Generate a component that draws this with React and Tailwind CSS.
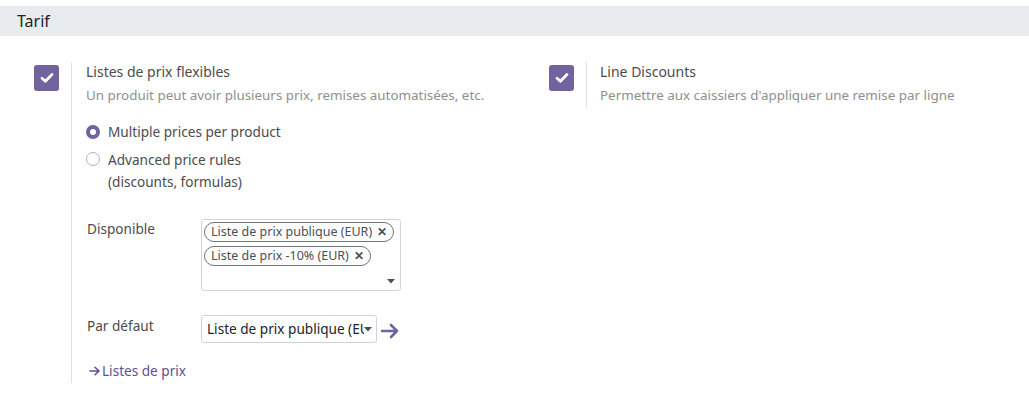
import React from "react";

const Check = () => (
    <div className="w-[25px] h-[26px] rounded-[3px] bg-[#71639e] flex items-center justify-center shrink-0">
        <svg width="14" height="12" viewBox="0 0 14 12">
            <path d="M2 6.2 L5.4 9.3 L12 2.6" fill="none" stroke="white" strokeWidth="2.8" strokeLinecap="round" strokeLinejoin="round" />
        </svg>
    </div>
);

const Tag = ({ label }) => (
    <span className="inline-flex items-center h-[20px] px-[6px] rounded-full border border-[#6c757d] text-[12.5px] text-[#495057] leading-none gap-[5px] whitespace-nowrap">
        {label}
        <span className="text-[12px] font-bold text-[#495057]">✕</span>
    </span>
);

const Caret = () => (
    <svg width="8" height="5" viewBox="0 0 8 5"><path d="M0 0 L8 0 L4 4.5 Z" fill="#495057" /></svg>
);

export default function App() {
    return (
        <div className="w-[1029px] h-[397px] bg-white pt-[6px] text-[#374151]" style={{ fontFamily: "'Noto Sans', sans-serif" }}>
            <div className="h-[30px] bg-[#e9ecef] pl-[17px] flex items-center text-[16px] text-[#212529]">Tarif</div>

            <div className="flex pt-[26px]">
                {/* left setting */}
                <div className="w-[515px] shrink-0 pl-[34px] flex">
                    <div className="pt-[3px]"><Check /></div>
                    <div className="ml-[12px] border-l border-[#dee2e6] pl-[14px] pb-[2px]">
                        <div className="text-[14px] text-[#4c4c4c] leading-[20px]">Listes de prix flexibles</div>
                        <div className="text-[13.4px] text-[#8f8f8f] leading-[20px] mt-[3px] whitespace-nowrap">Un produit peut avoir plusieurs prix, remises automatisées, etc.</div>

                        <div className="mt-[17px] flex flex-col text-[13.6px] text-[#4c4c4c]">
                            <label className="flex items-center gap-[8px] h-[20px]">
                                <span className="w-[14px] h-[14px] rounded-full bg-[#71639e] flex items-center justify-center">
                                    <span className="w-[6px] h-[6px] rounded-full bg-white" />
                                </span>
                                Multiple prices per product
                            </label>
                            <label className="flex items-start gap-[8px] mt-[7px]">
                                <span className="w-[14px] h-[14px] mt-[3px] rounded-full border border-[#adb5bd] bg-white" />
                                <span className="leading-[22px]">Advanced price rules<br />(discounts, formulas)</span>
                            </label>
                        </div>

                        <div className="mt-[26px] flex">
                            <div className="w-[115px] pl-[1px] text-[13.6px] text-[#4c4c4c]">Disponible</div>
                            <div className="w-[200px] h-[72px] border border-[#ced4da] rounded-[3px] p-[2px] flex flex-col items-start gap-[4px] relative">
                                <Tag label="Liste de prix publique (EUR)" />
                                <Tag label="Liste de prix -10% (EUR)" />
                                <span className="absolute right-[5px] bottom-[6px]"><Caret /></span>
                            </div>
                        </div>

                        <div className="mt-[24px] flex items-center">
                            <div className="w-[115px] pl-[1px] self-start pt-[1px] text-[13.6px] text-[#4c4c4c]">Par défaut</div>
                            <div className="w-[176px] h-[28px] border border-[#ced4da] rounded-[3px] flex items-center pl-[5px] pr-[4px] overflow-hidden">
                                <span className="text-[13.6px] text-[#212529] whitespace-nowrap overflow-hidden flex-1">Liste de prix publique (EUR)</span>
                                <Caret />
                            </div>
                            <svg className="ml-[3px] mt-[4px]" width="20" height="16" viewBox="0 0 20 16">
                                <path d="M2 8 H17 M11 2 L17 8 L11 14" fill="none" stroke="#71639e" strokeWidth="2.6" strokeLinecap="round" strokeLinejoin="round" />
                            </svg>
                        </div>

                        <div className="mt-[18px] ml-[3px] flex items-center text-[13.6px] text-[#5f4f8f] gap-[1px]">
                            <svg width="12" height="10" viewBox="0 0 12 10">
                                <path d="M1 5 H10 M6 1.2 L10 5 L6 8.8" fill="none" stroke="#5f4f8f" strokeWidth="1.5" strokeLinecap="round" strokeLinejoin="round" />
                            </svg>
                            Listes de prix
                        </div>
                    </div>
                </div>

                {/* right setting */}
                <div className="w-[514px] shrink-0 pl-[34px] flex items-start">
                    <div className="pt-[3px]"><Check /></div>
                    <div className="ml-[12px] border-l border-[#dee2e6] pl-[13px] pb-[3px]">
                        <div className="text-[14px] text-[#4c4c4c] leading-[20px]">Line Discounts</div>
                        <div className="text-[13.4px] text-[#8f8f8f] leading-[20px] mt-[3px] whitespace-nowrap">Permettre aux caissiers d'appliquer une remise par ligne</div>
                    </div>
                </div>
            </div>
        </div>
    );
}
